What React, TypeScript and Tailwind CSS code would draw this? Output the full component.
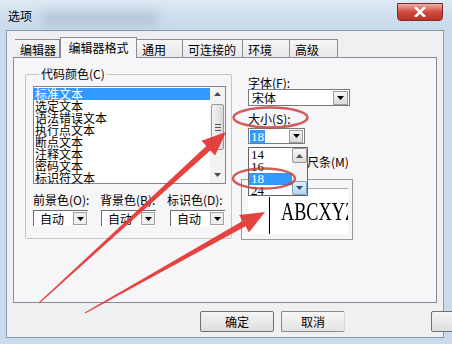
import React from 'react';

const cjk = { fontFamily: '"Noto Sans CJK SC", "Liberation Sans", sans-serif' };

const colorItems = ['标准文本', '选定文本', '语法错误文本', '执行点文本', '断点文本', '注释文本', '密码文本', '标识符文本'];

const tabs = [
  { name: '编辑器', w: 'w-[45px]' },
  { name: '编辑器格式', w: 'w-[77px]', active: true },
  { name: '通用', w: 'w-[46px]' },
  { name: '可连接的', w: 'w-[60px]' },
  { name: '环境', w: 'w-[47px]' },
  { name: '高级', w: 'w-[48px]' },
];

const Tri = ({ up = false, color = '#000' }: { up?: boolean; color?: string }) => (
  <svg width="7" height="4" viewBox="0 0 7 4">
    <polygon points={up ? '0,4 7,4 3.5,0' : '0,0 7,0 3.5,4'} fill={color} />
  </svg>
);

const AutoCombo = () => (
  <div className="flex h-[16px] w-[55px] items-center border-l border-t border-[#6e6e6e] border-b-white border-r-white bg-white">
    <span className="ml-[6px] flex-1 text-[12px] leading-none">自动</span>
    <div className="mr-[1px] flex h-[13px] w-[14px] items-center justify-center border border-[#a0a0a0] bg-[#eeeeee]">
      <Tri />
    </div>
  </div>
);

const App: React.FC = () => {
  return (
    <div className="relative h-[344px] w-[452px] overflow-hidden bg-[#c9dbec] text-black" style={cjk}>
      {/* title bar */}
      <div className="relative flex h-[30px] items-start bg-[linear-gradient(180deg,#dde9f4,#c6d8ea)]">
        <div className="absolute left-[40px] top-[12px] h-[12px] w-[120px] rounded-full bg-[#8fa3b6] opacity-50 blur-[6px]" />
        <span className="relative ml-[8px] mt-[10px] text-[12px] leading-none">选项</span>
        <div className="ml-auto mr-[9px] mt-[3px] flex h-[18px] w-[46px] items-center justify-center rounded-b-[4px] border border-[#7c2a22] bg-[linear-gradient(180deg,#eab1a8,#d2493d_50%,#b93226)]">
          <svg width="12" height="10" viewBox="0 0 12 10">
            <path d="M2 1 L10 9 M10 1 L2 9" stroke="#fff" strokeWidth="2.6" strokeLinecap="square" />
          </svg>
        </div>
      </div>

      {/* client area */}
      <div className="ml-[6px] flex h-[308px] w-[438px] flex-col border border-[#8d9aa8] bg-[#f0eff2]">
        {/* tab strip */}
        <div className="ml-[8px] mt-[5px] flex h-[21px] items-end">
          {tabs.map((t) =>
            t.active ? (
              <div
                key={t.name}
                className={`relative z-10 -mb-px flex h-[21px] ${t.w} items-start justify-center border border-b-0 border-[#898c95] bg-[#f6f5f8] pt-[3px] text-[12px] leading-[13px]`}
              >
                {t.name}
              </div>
            ) : (
              <div
                key={t.name}
                className={`flex h-[18px] ${t.w} items-start border-r border-t border-[#898c95] bg-[linear-gradient(180deg,#f6f6f6,#e8e8ea)] pl-[5px] pt-[3px] text-[12px] leading-[13px]`}
              >
                {t.name}
              </div>
            )
          )}
        </div>

        {/* tab panel */}
        <div className="ml-[6px] flex h-[246px] w-[424px] border border-[#898c95] bg-[#f6f5f8]">
          {/* code colour group */}
          <fieldset className="ml-[11px] mt-[10px] h-[171px] w-[207px] rounded-[2px] border border-[#c5c5c8] pl-[7px]">
            <legend className="ml-[6px] px-[2px] text-[12px] leading-[12px]">代码颜色(C)</legend>
            <div className="mt-[6px] flex h-[98px] w-[193px] border border-[#828790] bg-white">
              <div className="flex-1 pt-px">
                {colorItems.map((c, i) => (
                  <div
                    key={c}
                    className={`h-[12px] pl-[1px] text-[12px] leading-[12px] ${i === 0 ? 'bg-[#3399ff] text-white' : ''}`}
                  >
                    {c}
                  </div>
                ))}
              </div>
              <div className="flex w-[15px] flex-col items-center bg-[#f2f2f3]">
                <div className="mt-[5px]">
                  <Tri up color="#4a4a4a" />
                </div>
                <div className="mt-[8px] flex h-[46px] w-[13px] flex-col items-center justify-center gap-[2px] rounded-[2px] border border-[#9a9a9a] bg-[linear-gradient(90deg,#f3f3f3,#d9d9d9)]">
                  <div className="h-px w-[6px] bg-[#555]" />
                  <div className="h-px w-[6px] bg-[#555]" />
                  <div className="h-px w-[6px] bg-[#555]" />
                </div>
                <div className="mt-auto mb-[6px]">
                  <Tri color="#4a4a4a" />
                </div>
              </div>
            </div>
            <div className="mt-[10px] grid grid-cols-[67px_67px_59px] text-[12px] leading-[12px]">
              <span>前景色(O):</span>
              <span>背景色(B):</span>
              <span>标识色(D):</span>
            </div>
            <div className="mt-[4px] grid grid-cols-[68px_69px_56px]">
              <AutoCombo />
              <AutoCombo />
              <AutoCombo />
            </div>
          </fieldset>

          {/* font column */}
          <div className="ml-[16px] mt-[19px] flex flex-col text-[12px] leading-[12px]">
            <span>字体(F):</span>
            <div className="flex h-[17px] w-[102px] items-center border border-[#7a7a7a] bg-white">
              <span className="ml-[3px] flex-1">宋体</span>
              <div className="mr-px flex h-[14px] w-[15px] items-center justify-center border border-[#9c9c9c] bg-[linear-gradient(180deg,#f6f6f6,#dadada)]">
                <Tri />
              </div>
            </div>
            <span className="mt-[7px]">大小(S):</span>
            <div className="relative mt-[3px] flex h-[16px] w-[57px] items-center border border-[#7a7a7a] bg-white">
              <span className="ml-px bg-[#3399ff] px-px text-[13px] leading-[13px] text-white" style={{ fontFamily: '"Liberation Serif", serif' }}>
                18
              </span>
              <div className="ml-auto mr-px flex h-[13px] w-[14px] items-center justify-center border border-[#9c9c9c] bg-[linear-gradient(180deg,#f6f6f6,#dadada)]">
                <Tri />
              </div>
              {/* open size list */}
              <div className="absolute left-[-1px] top-[18px] z-20 flex h-[49px] w-[60px] border border-[#646464] bg-white" style={{ fontFamily: '"Liberation Serif", serif' }}>
                <div className="flex flex-1 flex-col pt-px text-[13px] leading-[12px]">
                  <span className="pl-[2px]">14</span>
                  <span className="pl-[2px]">16</span>
                  <span className="bg-[#3399ff] pl-[2px] text-white">18</span>
                  <span className="pl-[2px]">24</span>
                </div>
                <div className="flex w-[15px] flex-col bg-[#f4f4f4]">
                  <div className="flex h-[15px] items-center justify-center rounded-[2px] border border-[#9a9a9a] bg-[linear-gradient(180deg,#f8f8f8,#dcdcdc)]">
                    <Tri up color="#555" />
                  </div>
                  <div className="mt-auto flex h-[14px] items-center justify-center rounded-[2px] border border-[#7aa3c8] bg-[linear-gradient(180deg,#e3f0fb,#b6d4ee)]">
                    <Tri color="#2b4f74" />
                  </div>
                </div>
              </div>
            </div>
            <div className="mt-[11px] flex items-center">
              <div className="ml-[4px] h-[13px] w-[13px] border border-[#8f8f8f] bg-white" />
              <span className="ml-[6px]">显示标尺条(M)</span>
            </div>
            <div className="ml-[-7px] mt-[11px] h-[61px] w-[112px] border border-[#9a9a9e] bg-[#f6f5f8] pl-[6px] pt-[8px]">
              <div className="flex h-[46px] w-[100px] items-center overflow-hidden border-t border-[#a8a8a8] bg-white">
                <div className="ml-[21px] mt-[8px] h-[38px] w-px shrink-0 self-start bg-black" />
                <span
                  className="ml-[11px] inline-block origin-left scale-x-[0.73] whitespace-nowrap text-[25px] leading-none"
                  style={{ fontFamily: '"Liberation Serif", serif' }}
                >
                  ABCXYZ
                </span>
              </div>
            </div>
          </div>
        </div>

        {/* buttons */}
        <div className="mt-[8px] flex text-[12px]">
          <button className="ml-[193px] h-[21px] w-[74px] shrink-0 rounded-[2px] border border-[#707070] bg-[linear-gradient(180deg,#f4f4f4,#dedede)]">确定</button>
          <button className="ml-[7px] h-[21px] w-[64px] shrink-0 rounded-[2px] border border-[#8a8a8a] border-r-[#d8d8d8] bg-[linear-gradient(180deg,#f6f6f6,#e4e4e4)]">取消</button>
          <button className="ml-[86px] h-[21px] w-[40px] shrink-0 rounded-[2px] border border-[#707070] bg-[linear-gradient(180deg,#f4f4f4,#dedede)]" />
        </div>
      </div>

      {/* red annotations */}
      <svg className="pointer-events-none absolute inset-0 z-30" width="452" height="344" viewBox="0 0 452 344">
        <ellipse cx="270.5" cy="117.5" rx="37" ry="10" fill="none" stroke="#c8403e" strokeWidth="2.5" opacity="0.85" />
        <ellipse cx="264" cy="178.5" rx="31" ry="10" fill="none" stroke="#c8403e" strokeWidth="2.5" opacity="0.85" />
        <polygon
          points="38.7,302.6 206.3,146 201.5,140.8 226,132 215.1,155.6 210.3,150.4 39.3,303.4"
          fill="#e2332f"
          opacity="0.92"
        />
        <polygon
          points="84.8,312.6 242.6,221.1 239.2,215 265,212 249,232.4 245.6,226.3 85.2,313.4"
          fill="#e2332f"
          opacity="0.92"
        />
      </svg>
    </div>
  );
};

export default App;
